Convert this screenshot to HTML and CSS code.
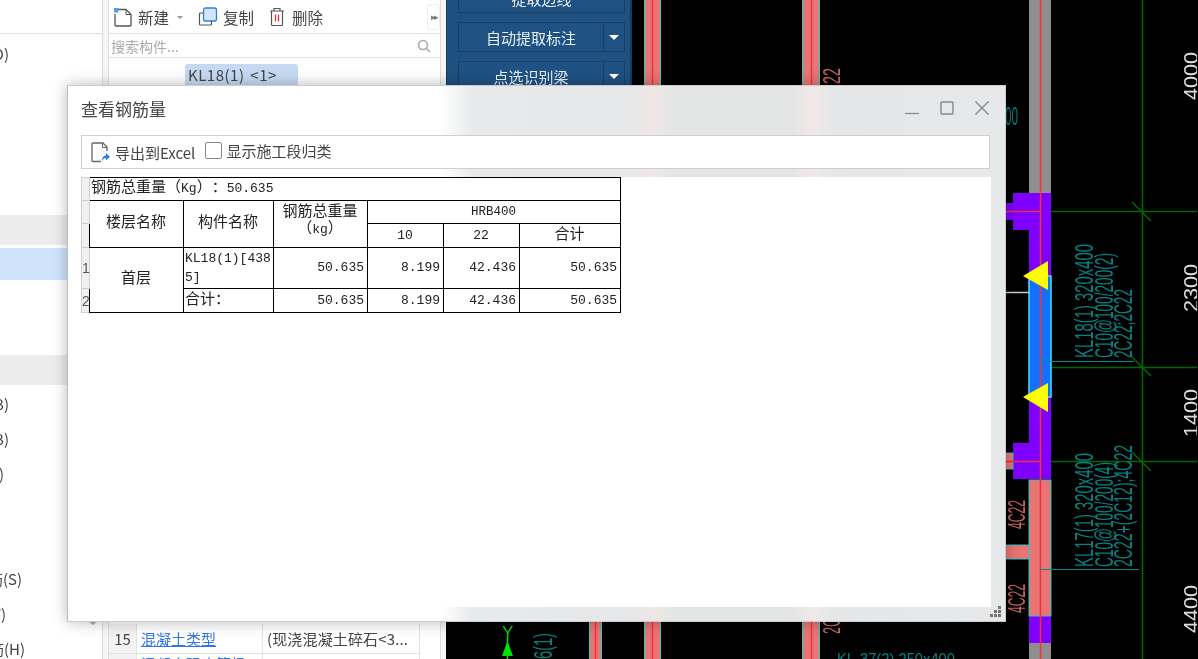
FILE: index.html
```html
<!DOCTYPE html>
<html lang="zh-CN">
<head>
  <meta charset="UTF-8" />
  <title>查看钢筋量</title>
  <link rel="stylesheet" href="styles.css">
</head>
<body>

<div class="app">

  <!-- Left navigation, cut off by the window edge -->
  <div class="nav">
    <div class="nav-top"></div>
    <div class="nav-row first">(D)</div>
    <div class="nav-band gray"></div>
    <div class="nav-band blue"></div>
    <div class="nav-band gray second"></div>
    <div class="nav-row after-band">(B)</div>
    <div class="nav-row">(B)</div>
    <div class="nav-row end-4">)</div>
    <div class="nav-row end-22 gap">筋(S)</div>
    <div class="nav-row end-6">(F)</div>
    <div class="nav-row end-25">筋(H)</div>
    <div class="nav-arrow"></div>
  </div>

  <!-- Component list and properties -->
  <div class="props">
    <div class="props-tools">
      <span class="tool new">
        <svg width="20" height="20" viewBox="0 0 20 20"><path d="M5 2.500h8l5 5V18a1 1 0 0 1-1 1H3a1 1 0 0 1-1-1V7" fill="none" stroke="#555" stroke-width="1.300"/><path d="M13 2.500V7.500h5" fill="none" stroke="#555" stroke-width="1"/><rect x="1" y="1" width="4.500" height="4.500" fill="#5b9be8"/></svg>
        新建
      </span>
      <span class="caret-small"></span>
      <span class="tool copy">
        <svg width="20" height="20" viewBox="0 0 20 20"><rect x="5.500" y="1" width="13" height="13" rx="2" fill="#d3e5fa" stroke="#2f7de0" stroke-width="1.300"/><path d="M5 6H2.500a1 1 0 0 0-1 1v10a1 1 0 0 0 1 1h10a1 1 0 0 0 1-1v-3" fill="none" stroke="#555" stroke-width="1.200"/></svg>
        复制
      </span>
      <span class="tool del">
        <svg width="18" height="20" viewBox="0 0 18 20"><path d="M2 4h14M6 4V1.500h6V4M3.500 4v13.500a1 1 0 0 0 1 1h9a1 1 0 0 0 1-1V4" fill="none" stroke="#555" stroke-width="1.200"/><path d="M7.500 7.500v7M10.500 7.500v7" stroke="#e33" stroke-width="1.300"/></svg>
        删除
      </span>
      <span class="more">▸▸</span>
    </div>
    <div class="props-search">
      <span>搜索构件...</span>
      <svg width="14" height="14" viewBox="0 0 14 14"><circle cx="6" cy="6" r="4.500" fill="none" stroke="#aaa" stroke-width="1.600"/><path d="M9.500 9.500L13 13" stroke="#aaa" stroke-width="1.600"/></svg>
    </div>
    <div class="props-list">
      <div class="chip">KL18(1) &lt;1&gt;</div>
    </div>
    <div class="props-grid">
      <div class="grid-row">
        <span class="grid-no">15</span>
        <span class="grid-name">混凝土类型</span>
        <span class="grid-val">(现浇混凝土碎石&lt;3...</span>
      </div>
      <div class="grid-row next">
        <span class="grid-no"></span>
        <span class="grid-name">混凝土强度等级</span>
        <span class="grid-val"></span>
      </div>
    </div>
  </div>

  <!-- CAD drawing with the floating tool panel on top -->
  <div class="canvas">
    <svg class="cad" width="751" height="659" viewBox="447 0 751 659">
      <!-- columns behind the dialog -->
      <rect class="beam" x="645" y="0" width="17" height="659"/>
      <rect class="beam" x="803" y="0" width="18" height="659"/>
      <rect class="beam" x="590" y="600" width="13" height="59"/>
      <path class="edge" d="M645.500 0V659M661.500 0V659M803.500 0V659M820.500 0V659M590.500 600V659M602.500 600V659"/>
      <path class="red" d="M653.500 0V659M812.500 0V659M596.500 600V659"/>

      <!-- axis lines -->
      <path class="axis" d="M1143.500 0V659M1030 211.500H1198M1041 367.500H1198M1041 461.500H1198M1133 202L1152 221M1133 357L1152 376M1133 452L1152 471"/>

      <!-- main column, top to bottom -->
      <rect class="gray" x="1030" y="0" width="22" height="193"/>
      <rect class="gray" x="1030" y="643" width="22" height="16"/>
      <path class="purple" d="M1014 193H1052V479H1014V443H1030V230H1014V220H1006V203H1014Z"/>
      <rect class="purple" x="1030" y="616" width="22" height="27"/>
      <rect class="blue" x="1030" y="276" width="22" height="121"/>
      <rect class="beam edged" x="1030" y="480" width="22" height="136"/>
      <rect class="beam edged" x="1006" y="453" width="8" height="16"/>
      <rect class="beam edged" x="1006" y="545" width="24" height="14"/>
      <path class="white-line" d="M1006 292.500H1030"/>
      <path class="red" d="M1041.500 0V659M1006 461.500H1041M1006 211.500H1041"/>
      <polygon class="yellow" points="1024,276 1049,261 1049,290"/>
      <polygon class="yellow" points="1024,397 1049,383 1049,412"/>
      <path class="leader" d="M1041 361.500H1135M1041 569.500H1140"/>

      <!-- beam labels -->
      <text class="teal" transform="translate(1094 358) rotate(-90)" textLength="114" lengthAdjust="spacingAndGlyphs">KL18(1) 320x400</text>
      <text class="teal" transform="translate(1114 358) rotate(-90)" textLength="105" lengthAdjust="spacingAndGlyphs">C10@100/200(2)</text>
      <text class="teal" transform="translate(1133 358) rotate(-90)" textLength="69" lengthAdjust="spacingAndGlyphs">2C22;2C22</text>
      <text class="teal" transform="translate(1094 567) rotate(-90)" textLength="114" lengthAdjust="spacingAndGlyphs">KL17(1) 320x400</text>
      <text class="teal" transform="translate(1114 567) rotate(-90)" textLength="105" lengthAdjust="spacingAndGlyphs">C10@100/200(4)</text>
      <text class="teal" transform="translate(1133 567) rotate(-90)" textLength="122" lengthAdjust="spacingAndGlyphs">2C22+(2C12);4C22</text>
      <text class="teal" x="1006" y="125" textLength="13" lengthAdjust="spacingAndGlyphs">00</text>
      <text class="teal" transform="translate(553 659) rotate(-90)" textLength="26" lengthAdjust="spacingAndGlyphs">6(1)</text>
      <text class="teal small" x="838" y="665" textLength="118" lengthAdjust="spacingAndGlyphs">KL-37(2) 250x400</text>
      <text class="salmon" transform="translate(1026 529) rotate(-90)" textLength="29" lengthAdjust="spacingAndGlyphs">4C22</text>
      <text class="salmon" transform="translate(1026 613) rotate(-90)" textLength="29" lengthAdjust="spacingAndGlyphs">4C22</text>
      <text class="salmon" transform="translate(841 84) rotate(-90)" textLength="16" lengthAdjust="spacingAndGlyphs">22</text>
      <text class="salmon" transform="translate(841 634) rotate(-90)" textLength="16" lengthAdjust="spacingAndGlyphs">2C</text>

      <!-- dimensions -->
      <text class="dim" transform="translate(1199 100) rotate(-90)" textLength="48" lengthAdjust="spacingAndGlyphs">4000</text>
      <text class="dim" transform="translate(1199 312) rotate(-90)" textLength="48" lengthAdjust="spacingAndGlyphs">2300</text>
      <text class="dim" transform="translate(1199 437) rotate(-90)" textLength="48" lengthAdjust="spacingAndGlyphs">1400</text>
      <text class="dim" transform="translate(1199 633) rotate(-90)" textLength="48" lengthAdjust="spacingAndGlyphs">4400</text>

      <!-- Y axis arrow -->
      <text class="axis-y" x="503" y="638">Y</text>
      <path class="axis-arrow" d="M508.500 638V659"/>
      <polygon class="axis-head" points="508.500,641 514,656 503,656"/>
    </svg>

    <div class="panel">
      <div class="panel-row"><span class="panel-btn">提取边线</span></div>
      <div class="panel-row"><span class="panel-btn">自动提取标注</span><span class="panel-drop"></span></div>
      <div class="panel-row"><span class="panel-btn">点选识别梁</span><span class="panel-drop"></span></div>
    </div>
  </div>
</div>

<!-- Dialog -->
<div class="dialog">
  <div class="dialog-title">
    <span class="dialog-name">查看钢筋量</span>
    <div class="win-btns">
      <svg width="16" height="16" viewBox="0 0 16 16"><path d="M1 13.500H15" stroke="#888" stroke-width="1.200"/></svg>
      <svg width="16" height="16" viewBox="0 0 16 16"><rect x="2" y="2" width="12" height="12" rx="1" fill="none" stroke="#888" stroke-width="1.400"/></svg>
      <svg width="16" height="16" viewBox="0 0 16 16"><path d="M1.500 1.500L14.500 14.500M14.500 1.500L1.500 14.500" stroke="#888" stroke-width="1.400"/></svg>
    </div>
  </div>

  <div class="dialog-tools">
    <span class="export">
      <svg width="20" height="21" viewBox="0 0 20 21"><path d="M17 9V5l-4-4H3a1 1 0 0 0-1 1v16.500a1 1 0 0 0 1 1h8" fill="none" stroke="#666" stroke-width="1.300"/><path d="M12.500 1v4.500H17" fill="none" stroke="#666"/><path d="M12 19c0-4 2-5.500 4-5.500V11l4 3.800-4 3.700v-2.500c-2 0-3 1-4 3z" fill="#2f7de0"/></svg>
      导出到Excel
    </span>
    <span class="check-box"></span>
    <span class="check-label">显示施工段归类</span>
  </div>

  <div class="dialog-body">
    <table class="rebar">
      <colgroup>
        <col class="c0"><col class="c1"><col class="c2"><col class="c3"><col class="c4"><col class="c5"><col class="c6">
      </colgroup>
      <tr class="r1">
        <th class="no"></th>
        <td colspan="6" class="left mono"><span class="cjk">钢筋总重量（</span>Kg<span class="cjk">）：</span>50.635</td>
      </tr>
      <tr class="r2">
        <th class="no"></th>
        <td rowspan="2">楼层名称</td>
        <td rowspan="2">构件名称</td>
        <td rowspan="2" class="top">钢筋总重量<br>（<span class="mono">kg</span>）</td>
        <td colspan="3" class="hrb">HRB400</td>
      </tr>
      <tr class="r3">
        <th class="no"></th>
        <td class="mono">10</td>
        <td class="mono">22</td>
        <td>合计</td>
      </tr>
      <tr class="r4">
        <th class="no">1</th>
        <td rowspan="2">首层</td>
        <td class="left mono tight">KL18(1)[4385]</td>
        <td class="num">50.635</td>
        <td class="num">8.199</td>
        <td class="num">42.436</td>
        <td class="num">50.635</td>
      </tr>
      <tr class="r5">
        <th class="no">2</th>
        <td class="left tight">合计：</td>
        <td class="num">50.635</td>
        <td class="num">8.199</td>
        <td class="num">42.436</td>
        <td class="num">50.635</td>
      </tr>
    </table>
  </div>

  <svg class="grip" width="11" height="11" viewBox="0 0 11 11"><path d="M8 0h3v3H8zM4 4h3v3H4zM8 4h3v3H8zM0 8h3v3H0zM4 8h3v3H4zM8 8h3v3H8z" fill="#777"/></svg>
</div>

</body>
</html>
```

FILE: styles.css
```css
* {
  box-sizing: border-box;
}

html, body {
  margin: 0;
  height: 659px;
  overflow: hidden;
}

body {
  font-family: "Noto Sans CJK SC", "Noto Sans", sans-serif;
  color: #444;
  filter: blur(0.45px);
}

.app {
  display: flex;
  height: 659px;
  background: #f6f6f6;
}

/* left nav */
.nav {
  position: relative;
  width: 103px;
  flex-shrink: 0;
  overflow: hidden;
  background: white;
  border-right: 1px solid #ddd;
  font-size: 15px;
}

.nav-top {
  height: 34px;
  border-bottom: 1px solid #ddd;
}

.nav-row {
  display: flex;
  justify-content: flex-end;
  align-items: center;
  height: 35px;
  padding: 0 93px 4px 0;
  white-space: nowrap;
}

.nav-row.first {
  margin-top: 4px;
}

.nav-row.after-band {
  margin-top: 3px;
}

.nav-row.gap {
  margin-top: 70px;
}

.nav-row.end-4 {
  padding-right: 98px;
}

.nav-row.end-22 {
  padding-right: 80px;
}

.nav-row.end-6 {
  padding-right: 96px;
}

.nav-row.end-25 {
  padding-right: 77px;
}

.nav-band {
  height: 30px;
}

.nav-band.gray {
  margin-top: 142px;
  background: #ececec;
}

.nav-band.blue {
  height: 32px;
  margin-top: 3px;
  background: #cfe4fb;
}

.nav-band.second {
  margin-top: 75px;
}

.nav-arrow {
  position: absolute;
  left: 88px;
  top: 621px;
  border-left: 5px solid transparent;
  border-right: 5px solid transparent;
  border-top: 4px solid #aaa;
}

/* component panel */
.props {
  display: flex;
  flex-direction: column;
  width: 333px;
  margin: 0 5px;
  flex-shrink: 0;
  background: white;
  border-left: 1px solid #ddd;
  border-right: 1px solid #ddd;
  overflow: hidden;
}

.props-tools {
  display: flex;
  align-items: center;
  height: 34px;
  flex-shrink: 0;
  padding-left: 4px;
  border-bottom: 1px solid #ddd;
  font-size: 15.500px;
}

.tool {
  display: flex;
  align-items: center;
  gap: 5px;
}

.caret-small {
  margin: 2px 15px 0 8px;
  border-left: 3px solid transparent;
  border-right: 3px solid transparent;
  border-top: 3px solid #999;
}

.tool.del {
  margin-left: 14px;
  gap: 6px;
}

.more {
  display: flex;
  align-items: center;
  justify-content: center;
  width: 13px;
  height: 26px;
  margin-left: auto;
  background: white;
  border: 1px solid #eee;
  border-radius: 3px;
  color: #777;
  font-size: 9px;
  letter-spacing: -2px;
}

.props-search {
  display: flex;
  align-items: center;
  justify-content: space-between;
  height: 24px;
  flex-shrink: 0;
  padding: 0 9px 0 2px;
  border-bottom: 1px solid #ddd;
  color: #aaa;
  font-size: 14px;
}

.props-list {
  flex: 1;
}

.chip {
  width: 113px;
  height: 30px;
  margin: 6px 0 0 76px;
  padding: 0 3px;
  background: #c5daf2;
  border-radius: 3px;
  font-size: 15px;
  line-height: 22px;
  letter-spacing: 0.5px;
  word-spacing: 2px;
}

.props-grid {
  height: 35px;
  flex-shrink: 0;
  overflow: hidden;
}

.grid-row {
  display: flex;
  width: 311px;
  height: 30px;
  border-bottom: 1px solid #e2e2e2;
  font-size: 15px;
  line-height: 29px;
}

.grid-row.next {
  line-height: 20px;
}

.grid-no {
  width: 28px;
  text-align: center;
  background: #f2f2f2;
  border-right: 1px solid #e2e2e2;
}

.grid-name {
  width: 126px;
  padding-left: 4px;
  color: #3274ec;
  text-decoration: underline;
  white-space: nowrap;
  overflow: hidden;
  border-right: 1px solid #e2e2e2;
}

.grid-val {
  flex: 1;
  padding-left: 4px;
  letter-spacing: 0.15px;
  white-space: nowrap;
  overflow: hidden;
  border-right: 1px solid #e2e2e2;
}

/* CAD area */
.canvas {
  position: relative;
  flex: 1;
  background: black;
  overflow: hidden;
}

.cad {
  display: block;
}

.cad text {
  font-family: "Liberation Sans", sans-serif;
}

.beam {
  fill: #e87474;
}

.beam.edged {
  stroke: #2cc4c4;
  stroke-width: 1;
}

.edge {
  fill: none;
  stroke: #2cd0d0;
}

.red {
  fill: none;
  stroke: #f0303a;
  stroke-width: 1.500;
}

.axis {
  fill: none;
  stroke: #006a00;
  stroke-width: 1.500;
}

.gray {
  fill: #8e8e8e;
}

.purple {
  fill: #8000ff;
}

.blue {
  fill: #1470ff;
  stroke: #45e0ff;
  stroke-width: 1.500;
}

.yellow {
  fill: #ffff00;
}

.white-line {
  stroke: #ccc;
  stroke-width: 1.500;
}

.leader {
  fill: none;
  stroke: #0a8a8a;
}

.teal {
  fill: #088080;
  font-size: 26px;
}

.teal.small {
  font-size: 16px;
}

.salmon {
  fill: #c86464;
  font-size: 24px;
}

.dim {
  fill: #dcdcdc;
  font-size: 20px;
}

.axis-y {
  fill: #00d800;
  font-size: 17px;
}

.axis-arrow {
  stroke: #00e000;
  stroke-width: 1.500;
}

.axis-head {
  fill: #00e000;
}

/* floating tool panel */
.panel {
  position: absolute;
  left: 0;
  top: 0;
  width: 186px;
  height: 300px;
  padding: 0 5px 0 11px;
  overflow: hidden;
  background: #1e5080;
  border-left: 1px solid #163c64;
  border-right: 2px solid #163c64;
}

.panel-row {
  display: flex;
  height: 30px;
  margin-bottom: 9px;
  color: #e6edf4;
  font-size: 15px;
  line-height: 30px;
}

.panel-row:first-child {
  margin-top: -17px;
}

.panel-btn {
  flex: 1;
  text-align: center;
  background: #1f5283;
  border: 1px solid #173f68;
}

.panel-drop {
  display: flex;
  align-items: center;
  justify-content: center;
  width: 21px;
  background: #1f5283;
  border: 1px solid #173f68;
  border-left: none;
}

.panel-drop::before {
  content: "";
  border-left: 5px solid transparent;
  border-right: 5px solid transparent;
  border-top: 5px solid white;
}

/* dialog */
.dialog {
  position: absolute;
  left: 67px;
  top: 85px;
  display: flex;
  flex-direction: column;
  width: 939px;
  height: 537px;
  padding: 0 14px 14px 13px;
  background: linear-gradient(90deg, white 0, white 372px, #e7e9eb 405px, #e6e7e8 565px, #f0e6e6 585px, #e4e5e5 605px, #e4e5e5 725px, #f1e8e8 745px, #e4e6e8 765px, #e6e8ea 100%);
  border: 1px solid #ccc;
  border-left-color: #bbb;
  box-shadow: 0 0 14px rgba(0, 0, 0, 0.28);
}

.dialog-title {
  display: flex;
  align-items: center;
  justify-content: space-between;
  height: 49px;
  padding-bottom: 4px;
  flex-shrink: 0;
}

.dialog-name {
  color: #444;
  font-size: 17px;
}

.win-btns {
  display: flex;
  gap: 19px;
  margin: 0 1px 1px 0;
}

.dialog-tools {
  display: flex;
  align-items: center;
  height: 34px;
  flex-shrink: 0;
  margin-right: 1px;
  padding-left: 8px;
  background: white;
  border: 1px solid #ccd0d4;
  font-size: 15px;
}

.export {
  display: flex;
  align-items: center;
  gap: 5px;
}

.check-box {
  width: 17px;
  height: 17px;
  margin: -3px 4px 0 10px;
  border: 1px solid #888;
  border-radius: 2px;
}

.check-label {
  margin-top: -3px;
}

.dialog-body {
  flex: 1;
  margin-top: 8px;
  background: white;
}

.rebar {
  width: 539px;
  table-layout: fixed;
  border-collapse: collapse;
  font-family: "Liberation Mono", "Noto Sans CJK SC", monospace;
  font-size: 13px;
  color: #222;
  text-spacing-trim: space-all;
}

.rebar col.c0 { width: 8px; }
.rebar col.c1 { width: 94px; }
.rebar col.c2 { width: 90px; }
.rebar col.c3 { width: 94px; }
.rebar col.c4 { width: 76px; }
.rebar col.c5 { width: 76px; }
.rebar col.c6 { width: 101px; }

.rebar td {
  padding: 0 3px 0 2px;
  border: 1px solid black;
  text-align: center;
  font-size: 15px;
  line-height: 20px;
  overflow: hidden;
}

.rebar .mono,
.rebar td.mono {
  font-size: 13px;
}

.rebar .cjk {
  font-size: 15px;
}

.rebar td.left {
  padding-left: 1px;
  text-align: left;
  word-break: break-all;
}

.rebar td.tight {
  padding-right: 0;
  line-height: 19px;
}

.rebar td.num {
  text-align: right;
  font-size: 13px;
}

.rebar td.top {
  vertical-align: top;
  padding-top: 3px;
  line-height: 17px;
}

.rebar td.hrb {
  font-size: 12.500px;
}

.rebar .r1 { height: 23px; }
.rebar .r2 { height: 23px; }
.rebar .r3 { height: 24px; }
.rebar .r4 { height: 41px; }
.rebar .r5 { height: 24px; }

.rebar th.no {
  padding: 0;
  background: #f0f0f0;
  border: 1px solid #d0d0d0;
  color: #555;
  font-family: "Liberation Sans", sans-serif;
  font-size: 14px;
  font-weight: normal;
}

.grip {
  position: absolute;
  right: 4px;
  bottom: 4px;
}
```
